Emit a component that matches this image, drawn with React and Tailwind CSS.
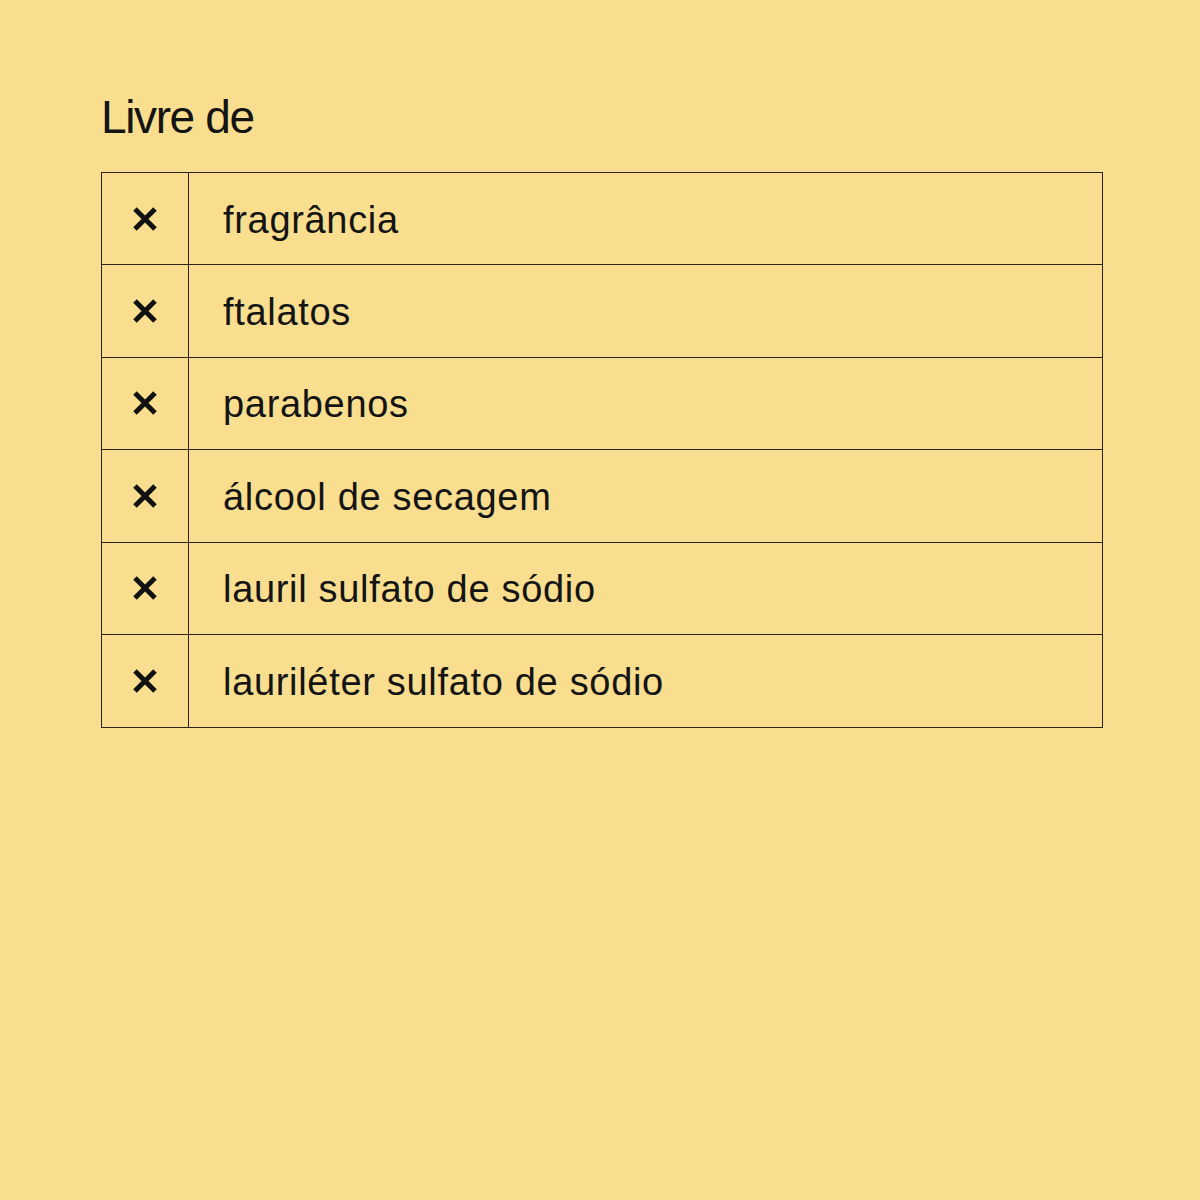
const items = [
  'fragrância',
  'ftalatos',
  'parabenos',
  'álcool de secagem',
  'lauril sulfato de sódio',
  'lauriléter sulfato de sódio',
]

function Cross() {
  return (
    <svg width="28" height="28" viewBox="0 0 28 28" className="block">
      <path d="M4 4 L24 24 M24 4 L4 24" stroke="#111" strokeWidth="5" strokeLinecap="butt" fill="none" />
    </svg>
  )
}

export default function App() {
  return (
    <div
      className="min-h-[1200px] w-full bg-[#f8de8e] px-[101px] pt-[94px] text-[#141414]"
      style={{ fontFamily: '"Liberation Sans", Arial, sans-serif' }}
    >
      <h1 className="text-[46px] leading-none tracking-[-0.03em]">Livre de</h1>
      <div className="mt-[32px] w-[1002px] border border-[#2a2418] divide-y divide-[#2a2418]">
        {items.map((item) => (
          <div key={item} className="flex h-[92.4px]">
            <div className="flex w-[87px] shrink-0 items-center justify-center border-r border-[#2a2418]">
              <Cross />
            </div>
            <div className="flex items-center pl-[34px] pt-[2px] text-[38px] leading-none tracking-[0.018em]">
              {item}
            </div>
          </div>
        ))}
      </div>
    </div>
  )
}
